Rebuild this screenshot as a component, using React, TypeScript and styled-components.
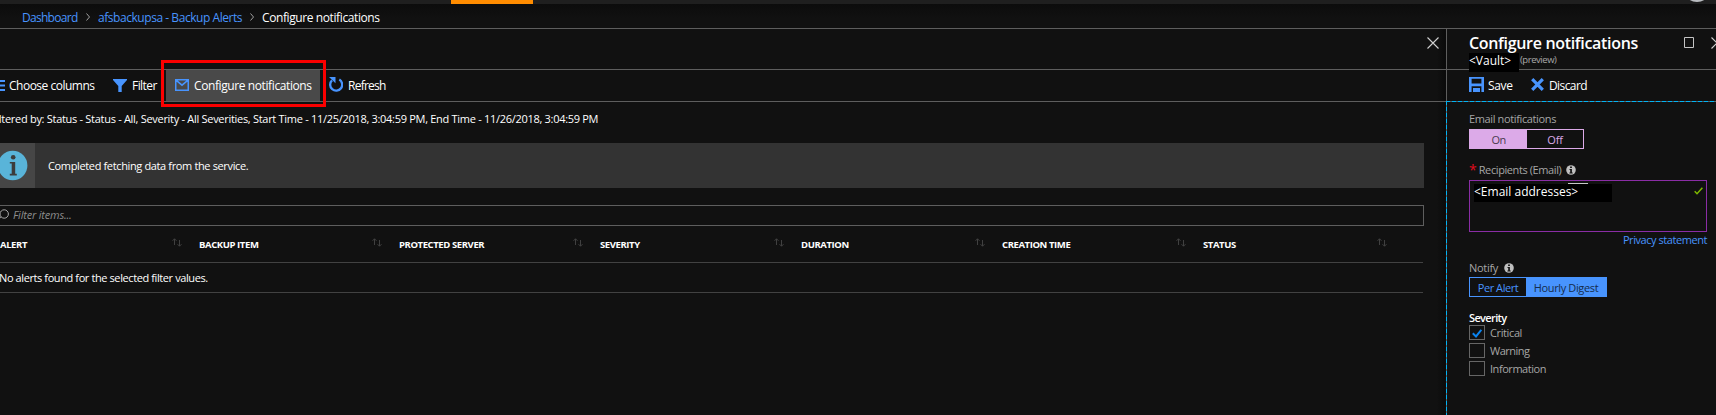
import React from "react";
import styled, { createGlobalStyle } from "styled-components";

const Global = createGlobalStyle`
  * { box-sizing: border-box; }
  html, body { margin: 0; background: #111; overflow: hidden; }
  body { font-family: "Open Sans", "Noto Sans", sans-serif; color: #fff; }
  svg { display: block; flex: none; }
`;

const line = "#5e5e5e";
const blue = "#4894fe";

const Page = styled.div`
  display: flex;
  flex-direction: column;
  width: 1716px;
  height: 415px;
  background: #111;
  overflow: hidden;
`;
const TopBar = styled.div`
  display: flex;
  justify-content: space-between;
  height: 4px;
  padding: 0 12px 0 451px;
  background: #1f1f1f;
  overflow: hidden;
`;
const ActiveMark = styled.div`
  width: 82px;
  background: #ff8c00;
`;
const Avatar = styled.div`
  width: 28px;
  height: 28px;
  margin-top: -26px;
  margin-right: -7px;
  border-radius: 50%;
  background: #b9bcc0;
`;
const Text = styled.span<{ $size?: number; $gap?: number; $color?: string; $weight?: number; $ml?: number }>`
  font-size: ${(p) => p.$size ?? 12}px;
  letter-spacing: ${(p) => p.$gap ?? 0}px;
  color: ${(p) => p.$color ?? "#fff"};
  font-weight: ${(p) => p.$weight ?? 400};
  margin-left: ${(p) => p.$ml ?? 0}px;
  white-space: pre;
`;
const Breadcrumb = styled.nav`
  display: flex;
  align-items: center;
  height: 25px;
  padding: 2px 0 0 22px;
  border-bottom: 1px solid ${line};
  background: linear-gradient(#0c0c0c, #111 60%);
`;
const Crumb = styled(Text)<{ $w: number }>`
  width: ${(p) => p.$w}px;
`;
const Separator = styled.svg`
  margin: 0 8px 0 8px;
`;
const Body = styled.div`
  display: flex;
  flex: 1;
`;
const Blade = styled.main`
  display: flex;
  flex-direction: column;
  width: 1446px;
  background: linear-gradient(to left, #0a0a0a, #111 9px);
`;
const BladeHead = styled.div`
  display: flex;
  justify-content: flex-end;
  height: 41px;
  padding: 8px 7px 0 0;
  border-bottom: 1px solid ${line};
`;
const Toolbar = styled.div`
  display: flex;
  align-items: stretch;
  height: 32px;
  border-bottom: 1px solid ${line};
`;
const Command = styled.button<{ $w: number; $pad: number; $gap: number; $active?: boolean }>`
  position: relative;
  display: flex;
  align-items: center;
  width: ${(p) => p.$w}px;
  padding: 0 0 0 ${(p) => p.$pad}px;
  gap: ${(p) => p.$gap}px;
  border: 0;
  font-family: inherit;
  background: ${(p) => (p.$active ? "#494949" : "transparent")};
`;
const Highlight = styled.span`
  position: absolute;
  inset: -10px -6px -6px -5px;
  border: 3px solid #fb0000;
  z-index: 1;
`;
const FilterSummary = styled.div`
  height: 41px;
  padding-top: 8px;
  line-height: 17px;
  margin-left: -9px;
  font-size: 11px;
`;
const InfoBar = styled.div`
  display: flex;
  width: 1424px;
  height: 45px;
  background: #333;
`;
const InfoBadge = styled.div`
  width: 35px;
  padding-top: 7px;
  background: #464646;
`;
const InfoMessage = styled.div`
  display: flex;
  align-items: center;
  padding: 0 0 0 13px;
`;
const SearchBox = styled.div`
  display: flex;
  align-items: center;
  width: 1424px;
  height: 21px;
  margin-top: 17px;
  border: 1px solid ${line};
  border-left: 0;
`;
const Placeholder = styled(Text)`
  padding-bottom: 2px;
  font-style: italic;
`;
const HeadRow = styled.div`
  display: flex;
  width: 1423px;
  height: 37px;
  border-bottom: 1px solid #424242;
`;
const HeadCell = styled.div<{ $w: number }>`
  display: flex;
  align-items: center;
  justify-content: space-between;
  width: ${(p) => p.$w}px;
  padding: 0 17px 0 0;
`;
const SortIcon = styled.svg`
  margin-top: -3px;
`;
const EmptyRow = styled.div`
  display: flex;
  align-items: center;
  width: 1424px;
  height: 30px;
  margin-left: -1px;
  border-bottom: 1px solid #424242;
`;
const Panel = styled.aside`
  display: flex;
  flex-direction: column;
  width: 270px;
  background: #111;
`;
const PanelHead = styled.header`
  display: flex;
  justify-content: space-between;
  height: 41px;
  padding-left: 22px;
  border-left: 1px solid ${line};
  border-bottom: 1px solid ${line};
`;
const PanelTitle = styled.div`
  display: flex;
  flex-direction: column;
  padding-top: 5px;
  line-height: 19px;
`;
const Subtitle = styled.div`
  display: flex;
  height: 19px;
  line-height: 13px;
`;
const VaultMask = styled.span`
  width: 50px;
  height: 19px;
  background: #000;
`;
const WindowButtons = styled.div`
  display: flex;
  gap: 16px;
  padding-top: 8px;
  width: 32px;
  overflow: hidden;
`;
const PanelToolbar = styled.div`
  display: flex;
  height: 31px;
  border-left: 1px solid ${line};
`;
const Form = styled.section`
  flex: 1;
  display: flex;
  flex-direction: column;
  padding: 9px 9px 0 23px;
  background:
    repeating-linear-gradient(to right, #00b3f5 0 4px, #55636a 4px 6px) 0 0 / 100% 1px no-repeat,
    repeating-linear-gradient(to bottom, #00b3f5 0 4px, #55636a 4px 6px) 0 0 / 1px 100% no-repeat;
`;
const FieldLabel = styled.label<{ $h: number; $pt?: number; $pb?: number }>`
  display: flex;
  align-items: center;
  height: ${(p) => p.$h}px;
  padding-top: ${(p) => p.$pt ?? 0}px;
  padding-bottom: ${(p) => p.$pb ?? 0}px;
`;
const Switch = styled.div<{ $w: number; $color: string }>`
  display: flex;
  width: ${(p) => p.$w}px;
  height: 20px;
  border: 1px solid ${(p) => p.$color};
`;
const Option = styled.div<{ $w?: number; $bg?: string }>`
  display: flex;
  align-items: center;
  justify-content: center;
  flex: ${(p) => (p.$w ? "none" : "1")};
  width: ${(p) => (p.$w ? p.$w + "px" : "auto")};
  padding-top: 1px;
  background: ${(p) => p.$bg ?? "transparent"};
`;
const Recipients = styled.div`
  display: flex;
  justify-content: space-between;
  height: 52px;
  padding: 2px 3px 0 4px;
  border: 1px solid #8a2da5;
`;
const EmailMask = styled.div`
  width: 138px;
  height: 19px;
  background: linear-gradient(#c8c8c8, #c8c8c8) 94px 0 / 20px 1px no-repeat, linear-gradient(#000, #000) 0 1px / 100% 18px no-repeat;
  line-height: 14px;
`;
const CheckMark = styled.svg`
  margin-top: 4px;
`;
const Privacy = styled.a`
  align-self: flex-end;
  height: 28px;
  line-height: 13px;
`;
const NotifyDot = styled.span`
  margin: 2px 0 0 1px;
`;
const CheckRow = styled.div`
  display: flex;
  align-items: center;
  height: 15px;
  margin-bottom: 3px;
`;
const Box = styled.span`
  width: 16px;
  height: 15px;
  margin-right: 5px;
  padding: 3px 0 0 2px;
  border: 1px solid #666;
`;

const Chevron = () => (
  <Separator width="4" height="8" viewBox="0 0 4 8">
    <path d="M.5.5 3.5 4 .5 7.5" fill="none" stroke="#a0a0a0" />
  </Separator>
);
const Close = () => (
  <svg width="12" height="12" viewBox="0 0 12 12">
    <path d="M.5.5l11 11M11.5.5l-11 11" stroke="#d0d0d0" strokeWidth="1.1" />
  </svg>
);
const InfoDot = () => (
  <svg width="10" height="10" viewBox="0 0 10 10">
    <circle cx="5" cy="5" r="4.8" fill="#c0c0c0" />
    <path d="M4.1 1.6h1.8v1.5H4.1zM3.5 4h2.4v3.4h.8v1H3.4v-1h.8V5h-.7z" fill="#111" />
  </svg>
);

const columns: [string, number][] = [
  ["ALERT", 199],
  ["BACKUP ITEM", 200],
  ["PROTECTED SERVER", 201],
  ["SEVERITY", 201],
  ["DURATION", 201],
  ["CREATION TIME", 201],
  ["STATUS", 201],
];
const severities: [string, number, boolean][] = [
  ["Critical", -0.38, true],
  ["Warning", -0.5, false],
  ["Information", -0.45, false],
];

export default function App() {
  return (
    <Page>
      <Global />
      <TopBar>
        <ActiveMark />
        <Avatar />
      </TopBar>
      <Breadcrumb>
        <Crumb $w={56} $gap={-0.71} $color={blue}>Dashboard</Crumb>
        <Chevron />
        <Crumb $w={144} $gap={-0.45} $color={blue}>afsbackupsa - Backup Alerts</Crumb>
        <Chevron />
        <Text $gap={-0.4}>Configure notifications</Text>
      </Breadcrumb>
      <Body>
        <Blade>
          <BladeHead>
            <Close />
          </BladeHead>
          <Toolbar>
            <Command $w={113} $pad={0} $gap={4}>
              <svg width="5" height="11" viewBox="0 0 5 11">
                <path d="M0 1h5M0 5.5h5M0 10h5" stroke={blue} strokeWidth="2" />
              </svg>
              <Text $gap={-0.5}>Choose columns</Text>
            </Command>
            <Command $w={53} $pad={0} $gap={5}>
              <svg width="14" height="13" viewBox="0 0 14 13">
                <path d="M0 0h14v1L8.7 7v6H5.3V7L0 1z" fill={blue} />
              </svg>
              <Text $gap={-0.55}>Filter</Text>
            </Command>
            <Command $w={154} $pad={9} $gap={5} $active>
              <svg width="14" height="14" viewBox="0 0 14 14">
                <path d="M.75.75h12.5v10.5H.75zM1 1.2l6 5 6-5" fill="none" stroke={blue} strokeWidth="1.5" />
              </svg>
              <Text $gap={-0.4}>Configure notifications</Text>
              <Highlight />
            </Command>
            <Command $w={80} $pad={9} $gap={5}>
              <svg width="14" height="17" viewBox="0 0 14 17">
                <path d="M10.3 2.6A6 6 0 1 1 3 3.4" fill="none" stroke={blue} strokeWidth="2.3" />
                <path d="M0 0h6.5v6.2z" fill={blue} />
              </svg>
              <Text $gap={-0.75}>Refresh</Text>
            </Command>
          </Toolbar>
          <FilterSummary>
            <Text $size={11} $gap={-0.293}>
              Filtered by: Status - Status - All, Severity - All Severities, Start Time - 11/25/2018, 3:04:59 PM, End Time - 11/26/2018, 3:04:59 PM
            </Text>
          </FilterSummary>
          <InfoBar>
            <InfoBadge>
              <svg width="28" height="31" viewBox="0 0 28 31">
                <circle cx="12.7" cy="15.5" r="14.7" fill="#59b4d9" />
                <circle cx="13.2" cy="7.2" r="2.3" fill="#3c3c3c" />
                <path d="M9.8 12h5.4v11.8h1.6v1.6H9.8v-1.6h1.9V13.6H9.8z" fill="#3c3c3c" />
              </svg>
            </InfoBadge>
            <InfoMessage>
              <Text $size={11} $gap={-0.36}>Completed fetching data from the service.</Text>
            </InfoMessage>
          </InfoBar>
          <SearchBox>
            <svg width="9" height="14" viewBox="0 0 9 14">
              <circle cx="4.2" cy="5" r="4.2" fill="none" stroke="#aaa" />
              <path d="M1.2 8 0 9.3" stroke="#aaa" />
            </svg>
            <Placeholder $size={11} $gap={-0.2} $color="#8c8c8c" $ml={4}>Filter items...</Placeholder>
          </SearchBox>
          <HeadRow>
            {columns.map(([name, w]) => (
              <HeadCell key={name} $w={w}>
                <Text $size={9.5} $gap={-0.4} $weight={700}>{name}</Text>
                <SortIcon width="10" height="9" viewBox="0 0 10 9">
                  <path d="M2.5 7V.8M.5 2.8l2-2 2 2M7.5 2v6.2M5.5 6.2l2 2 2-2" fill="none" stroke="#404040" />
                </SortIcon>
              </HeadCell>
            ))}
          </HeadRow>
          <EmptyRow>
            <Text $size={11} $gap={-0.4}>No alerts found for the selected filter values.</Text>
          </EmptyRow>
        </Blade>
        <Panel>
          <PanelHead>
            <PanelTitle>
              <Text $size={16} $gap={-0.32} $weight={600}>Configure notifications</Text>
              <Subtitle>
                <VaultMask>
                  <Text $size={12}>{"<Vault>"}</Text>
                </VaultMask>
                <Text $size={9.5} $gap={-0.45} $color="#a8a8a8" $ml={1}>(preview)</Text>
              </Subtitle>
            </PanelTitle>
            <WindowButtons>
              <svg width="11" height="12" viewBox="0 0 11 12">
                <path d="M.5.5h9v10h-9z" fill="none" stroke="#c4c4c4" />
              </svg>
              <Close />
            </WindowButtons>
          </PanelHead>
          <PanelToolbar>
            <Command $w={84} $pad={22} $gap={4}>
              <svg width="15" height="17" viewBox="0 0 15 17">
                <path d="M0 0h15v15H0zM2.6 1.8v4.8h9.8V1.8zM2.6 9.3v5.7H4V11h7v4h1.4V9.3z" fill={blue} fillRule="evenodd" />
                <path d="M5 12.3h2V15H5z" fill={blue} />
              </svg>
              <Text $gap={-0.37}>Save</Text>
            </Command>
            <Command $w={90} $pad={0} $gap={5}>
              <svg width="13" height="15" viewBox="0 0 13 15">
                <path d="M1.2 1.2l10.6 10.6M11.8 1.2 1.2 11.8" stroke={blue} strokeWidth="3.2" />
              </svg>
              <Text $gap={-0.59}>Discard</Text>
            </Command>
          </PanelToolbar>
          <Form>
            <FieldLabel $h={19} $pb={2}>
              <Text $size={11} $gap={-0.37} $color="#a6a6a6">Email notifications</Text>
            </FieldLabel>
            <Switch $w={115} $color="#dcaae8">
              <Option $w={57} $bg="#dcaae8">
                <Text $size={11} $gap={-0.6} $color="#4a3a4e">On</Text>
              </Option>
              <Option>
                <Text $size={11} $gap={-0.15} $color="#dcaae8">Off</Text>
              </Option>
            </Switch>
            <FieldLabel $h={31} $pt={11} $pb={1}>
              <Text $size={14} $color="#e00b1c">*</Text>
              <Text $size={11} $gap={-0.4} $color="#a6a6a6" $ml={2}>Recipients (Email)  </Text>
              <InfoDot />
            </FieldLabel>
            <Recipients>
              <EmailMask>
                <Text $size={12}>{"<Email addresses>"}</Text>
              </EmailMask>
              <CheckMark width="9" height="8" viewBox="0 0 9 8">
                <path d="M.7 4.3 3 6.7 8.4.7" fill="none" stroke="#7fba00" strokeWidth="1.5" />
              </CheckMark>
            </Recipients>
            <Privacy>
              <Text $size={11} $gap={-0.44} $color={blue}>Privacy statement</Text>
            </Privacy>
            <FieldLabel $h={17} $pb={3}>
              <Text $size={11} $gap={-0.3} $color="#a6a6a6">Notify  </Text>
              <NotifyDot>
                <InfoDot />
              </NotifyDot>
            </FieldLabel>
            <Switch $w={138} $color={blue}>
              <Option $w={56}>
                <Text $size={11} $gap={-0.44} $color={blue}>Per Alert</Text>
              </Option>
              <Option $bg={blue}>
                <Text $size={11} $gap={-0.36} $color="#152c4c">Hourly Digest</Text>
              </Option>
            </Switch>
            <FieldLabel $h={28} $pt={13} $pb={1}>
              <Text $size={11} $gap={-0.64} $weight={600}>Severity</Text>
            </FieldLabel>
            {severities.map(([name, gap, on]) => (
              <CheckRow key={name}>
                <Box>
                  {on && (
                    <svg width="10" height="9" viewBox="0 0 10 9">
                      <path d="M.8 4.2 4 7.4 9.3.8" fill="none" stroke="#0a84f0" strokeWidth="2" />
                    </svg>
                  )}
                </Box>
                <Text $size={11} $gap={gap} $color="#a6a6a6">{name}</Text>
              </CheckRow>
            ))}
          </Form>
        </Panel>
      </Body>
    </Page>
  );
}
